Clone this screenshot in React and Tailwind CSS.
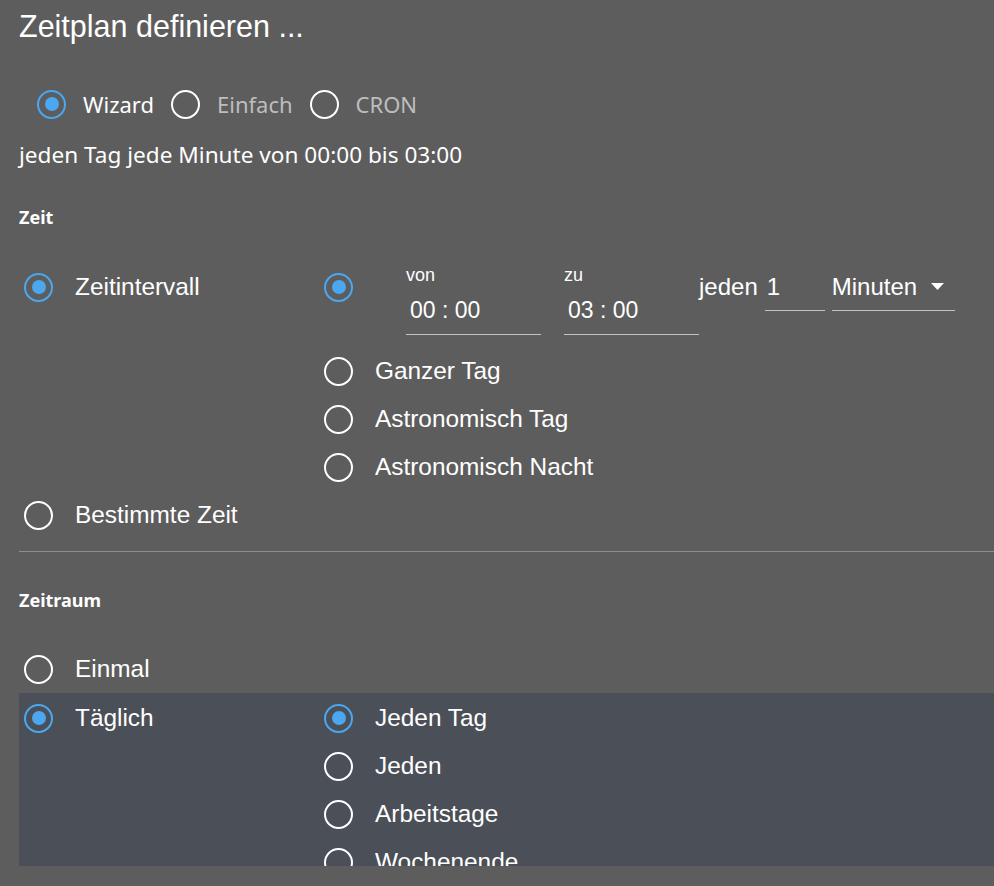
import React from 'react';

const ARIAL = { fontFamily: '"Liberation Sans", Arial, sans-serif' };
const SEGOE = { fontFamily: '"Noto Sans", "Open Sans", sans-serif' };

function Radio({ checked }) {
  return checked ? (
    <span className="w-[29px] h-[29px] shrink-0 rounded-full border-[2.5px] border-[#4aa7f0] flex items-center justify-center">
      <span className="w-[14px] h-[14px] rounded-full bg-[#4aa7f0]" />
    </span>
  ) : (
    <span className="w-[29px] h-[29px] shrink-0 rounded-full border-[2.5px] border-white" />
  );
}

function Option({ label, checked }) {
  return (
    <div className="h-[48px] shrink-0 flex items-center gap-[22px] text-[24.4px] text-white">
      <Radio checked={checked} />
      <span>{label}</span>
    </div>
  );
}

function TimeField({ label, value, className = '' }) {
  return (
    <div className={`flex flex-col w-[135px] ${className}`}>
      <div className="h-[24px] text-[18px] leading-[24px]">{label}</div>
      <div className="h-[48px] border-b border-[#c4c4c4] flex items-center pl-[4px] text-[23px]">{value}</div>
    </div>
  );
}

export default function App() {
  const modes = [
    { label: 'Wizard', checked: true },
    { label: 'Einfach' },
    { label: 'CRON' },
  ];

  return (
    <div className="h-[886px] overflow-hidden bg-[#5d5d5d] text-white pl-[19px] pt-[8px]" style={ARIAL}>
      <h1 className="text-[30.5px] leading-[36px] h-[36px]">Zeitplan definieren ...</h1>

      {/* mode switch */}
      <div className="mt-[40px] h-[40px] flex items-center ml-[18px] text-[22px]" style={SEGOE}>
        {modes.map(m => (
          <div key={m.label} className="flex items-center gap-[17px] mr-[17px]">
            <Radio checked={m.checked} />
            <span className={m.checked ? 'text-white' : 'text-[#bdbdbd]'}>{m.label}</span>
          </div>
        ))}
      </div>

      <p className="mt-[16px] text-[22.6px] leading-[30px]" style={SEGOE}>
        jeden Tag jede Minute von 00:00 bis 03:00
      </p>

      <h2 className="mt-[35px] text-[18px] leading-[24px] font-bold" style={SEGOE}>Zeit</h2>

      {/* Zeit */}
      <div className="mt-[34px] flex">
        <div className="w-[305px] shrink-0 flex flex-col justify-between">
          <div className="ml-[5px]"><Option label="Zeitintervall" checked /></div>
        </div>
        <div className="flex flex-col">
          <div className="h-[84px] flex items-start">
            <div className="h-[48px] flex items-center"><Radio checked /></div>
            <TimeField label="von" value="00 : 00" className="ml-[53px]" />
            <TimeField label="zu" value="03 : 00" className="ml-[23px]" />
            <div className="h-[48px] flex items-center text-[24px]">jeden</div>
            <div className="ml-[7px] w-[60px] h-[48px] border-b border-[#c4c4c4] flex items-center pl-[2px] text-[24px]">1</div>
            <div className="ml-[7px] w-[123px] h-[48px] border-b border-[#c4c4c4] flex items-center justify-between pr-[11px] text-[24px]">
              <span>Minuten</span>
              <svg width="13" height="7" viewBox="0 0 13 7"><polygon points="0,0 13,0 6.5,7" fill="white" /></svg>
            </div>
          </div>
          <Option label="Ganzer Tag" />
          <Option label="Astronomisch Tag" />
          <Option label="Astronomisch Nacht" />
        </div>
      </div>
      <div className="ml-[5px]"><Option label="Bestimmte Zeit" /></div>

      <div className="mt-[12px] h-px bg-[#8e8e8e]" />

      <h2 className="mt-[36px] text-[18px] leading-[24px] font-bold" style={SEGOE}>Zeitraum</h2>

      {/* Zeitraum */}
      <div className="mt-[33px] ml-[5px]"><Option label="Einmal" /></div>
      <div className="h-[173px] overflow-hidden bg-[#4b4f57] pt-px flex items-start">
        <div className="w-[305px] shrink-0 pl-[5px]"><Option label="Täglich" checked /></div>
        <div className="flex flex-col">
          <Option label="Jeden Tag" checked />
          <Option label="Jeden" />
          <Option label="Arbeitstage" />
          <Option label="Wochenende" />
        </div>
      </div>
    </div>
  );
}
